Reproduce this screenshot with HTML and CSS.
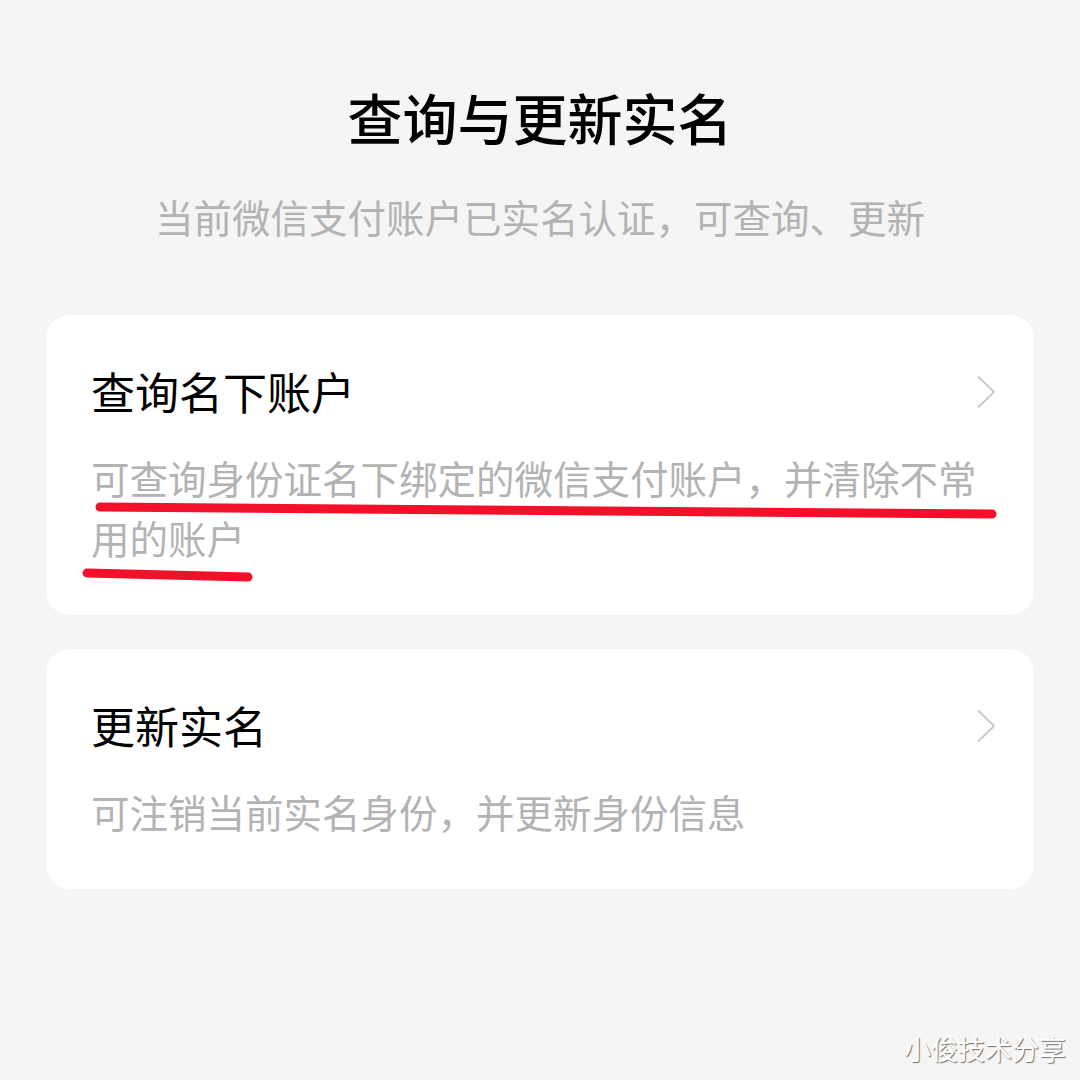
FILE: index.html
```html
<!DOCTYPE html>
<html lang="zh-CN">
<head>
<meta charset="utf-8">
<title>查询与更新实名</title>
<link rel="stylesheet" href="styles.css">
</head>
<body>
<main class="page">
  <header class="header">
    <h1 class="title">查询与更新实名</h1>
    <p class="subtitle">当前微信支付账户已实名认证，可查询、更新</p>
  </header>
  <section class="cards">
    <div class="card">
      <div class="card-head">
        <span class="card-title">查询名下账户</span>
        <svg class="chevron" viewBox="0 0 20 34" width="20" height="34"><path d="M2 1.5 L18 17 L2 32.5" fill="none" stroke="#c9c9c9" stroke-width="2"/></svg>
      </div>
      <p class="card-desc">可查询身份证名下绑定的微信支付账户，并清除不常用的账户</p>
      <svg class="marks" viewBox="0 0 988 300" width="988" height="300"><path d="M54 192 L946 199" stroke="#f2102a" stroke-width="9" stroke-linecap="round" fill="none"/><path d="M41 258 L202 262" stroke="#f2102a" stroke-width="9" stroke-linecap="round" fill="none"/></svg>
    </div>
    <div class="card">
      <div class="card-head">
        <span class="card-title">更新实名</span>
        <svg class="chevron" viewBox="0 0 20 34" width="20" height="34"><path d="M2 1.5 L18 17 L2 32.5" fill="none" stroke="#c9c9c9" stroke-width="2"/></svg>
      </div>
      <p class="card-desc">可注销当前实名身份，并更新身份信息</p>
    </div>
  </section>
  <div class="watermark">小俊技术分享</div>
</main>
</body>
</html>
```
FILE: styles.css
```css
html, body {
  margin: 0;
  padding: 0;
}
body {
  width: 1080px;
  height: 1080px;
  background: #f5f5f5;
  font-family: "Noto Sans CJK SC", "Noto Sans", sans-serif;
  overflow: hidden;
}
.page {
  position: relative;
  width: 1080px;
  height: 1080px;
  box-sizing: border-box;
  padding: 84px 46px 0;
}
.header {
  display: flex;
  flex-direction: column;
  align-items: center;
}
.title {
  margin: 0;
  font-size: 55px;
  line-height: 64px;
  font-weight: 500;
  color: #000;
}
.subtitle {
  margin: 43px 0 0;
  font-size: 38.5px;
  line-height: 50px;
  color: #b3b3b3;
}
.cards {
  margin-top: 74px;
  display: flex;
  flex-direction: column;
  gap: 34px;
}
.card {
  position: relative;
  background: #fff;
  border-radius: 24px;
  padding: 48px 46px 48px 45px;
}
.card + .card {
  padding-bottom: 48px;
}
.card-head {
  display: flex;
  align-items: center;
  justify-content: space-between;
  height: 56px;
}
.card-title {
  font-size: 44px;
  line-height: 56px;
  color: #000;
}
.chevron {
  margin-right: -8px;
  margin-top: 2px;
}
.card-desc {
  margin: 28px 0 0;
  font-size: 38.5px;
  line-height: 60px;
  color: #b3b3b3;
}
.marks {
  position: absolute;
  left: 0;
  top: 0;
  pointer-events: none;
}
.watermark {
  position: absolute;
  right: 14px;
  bottom: 13px;
  font-size: 27px;
  line-height: 36px;
  color: #fff;
  text-shadow: 1px 1px 1px rgba(0,0,0,0.55);
}
```
